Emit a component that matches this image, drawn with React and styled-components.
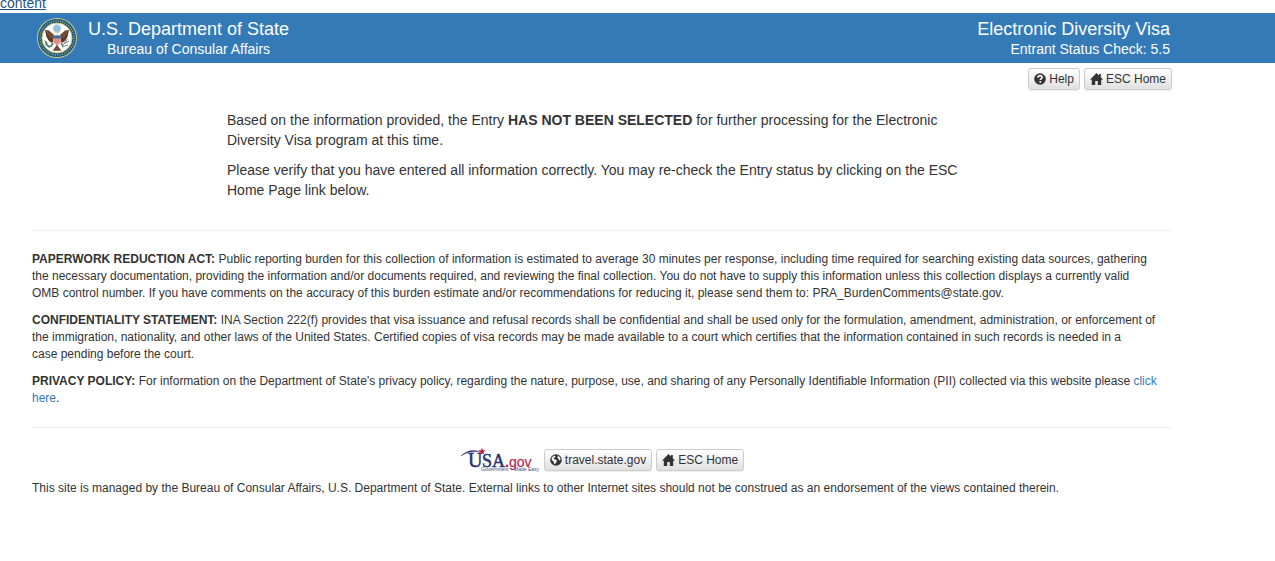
import React from "react";
import styled, { createGlobalStyle } from "styled-components";

const GlobalStyle = createGlobalStyle`
  *, *::before, *::after { box-sizing: border-box; }
  body {
    margin: 0;
    background: #fff;
    color: #333;
    font: 14px/20px "Liberation Sans", Arial, sans-serif;
  }
`;

const SkipBar = styled.nav`
  display: flex;
  align-items: flex-end;
  height: 13px;
  overflow: hidden;
`;

const SkipLink = styled.a`
  color: #23527c;
  text-decoration: underline;
`;

const Container = styled.div`
  max-width: 1204px;
  padding: 0 32px;
`;

const Banner = styled.header`
  background: #337ab7;
  color: #fff;
`;

const BannerRow = styled(Container)`
  display: flex;
  justify-content: space-between;
  align-items: center;
  min-height: 50px;
  padding-right: 34px;
`;

const Brand = styled.div`
  display: flex;
  align-items: center;
  gap: 11px;
  padding-left: 5px;
`;

const Heading = styled.div`
  padding-top: 2px;
  text-align: ${(p) => p.$align};
`;

const Title = styled.h1`
  margin: 0;
  font-size: 18px;
  font-weight: 400;
  line-height: 20px;
`;

const Subtitle = styled.p`
  margin: 0;
`;

const Tools = styled.div`
  display: flex;
  justify-content: ${(p) => p.$justify};
  align-items: center;
  gap: 4px;
`;

const TopTools = styled(Tools)`
  padding-top: 5px;
`;

const Button = styled.button`
  display: inline-flex;
  align-items: center;
  gap: 3px;
  padding: 1px 5px;
  border: 1px solid #ccc;
  border-radius: 3px;
  background: linear-gradient(#fff, #e0e0e0);
  box-shadow: inset 0 1px 0 rgba(255, 255, 255, 0.15), 0 1px 1px rgba(0, 0, 0, 0.075);
  color: #333;
  font: 12px/18px "Liberation Sans", Arial, sans-serif;
  cursor: pointer;
`;

const Result = styled.main`
  max-width: 782px;
  margin: 20px auto 30px;
  padding: 0 16px;
`;

const Paragraph = styled.p`
  margin: 0 0 10px;
  &:last-child { margin-bottom: 0; }
`;

const Rule = styled.hr`
  margin: 20px 0;
  border: 0;
  border-top: 1px solid #eee;
`;

const Notices = styled.section`
  font-size: 12px;
  line-height: 17px;
`;

const Link = styled.a`
  color: #337ab7;
  text-decoration: none;
`;

const ManagedBy = styled.p`
  margin: 8px 0 0;
  font-size: 12px;
  line-height: 17px;
`;

const HelpIcon = () => (
  <svg width="12" height="12" viewBox="0 0 12 12" aria-hidden="true">
    <circle cx="6" cy="6" r="5.8" fill="#333" />
    <path d="M3.9 4.7C3.9 3.2 4.7 2.6 6 2.6S8.1 3.3 8.1 4.4C8.1 5.7 6.3 5.6 6.3 7.1" fill="none" stroke="#f4f4f4" strokeWidth="1.7" />
    <rect x="5.4" y="8" width="1.8" height="1.7" fill="#f4f4f4" />
  </svg>
);

const HomeIcon = () => (
  <svg width="13" height="12" viewBox="0 0 13 12" aria-hidden="true">
    <path d="M6.5 0L9 2.5V1H10.8V4.3L13 6.8H11.2V12H7.8V8H5.2V12H1.8V6.8H0Z" fill="#333" />
  </svg>
);

const GlobeIcon = () => (
  <svg width="12" height="12" viewBox="0 0 12 12" aria-hidden="true">
    <circle cx="6" cy="6" r="5.8" fill="#333" />
    <path d="M2.2 3L4.4 1.5L5.6 2.2L5 3.5L3.6 4.1L3.9 5.1L5.5 5.5L6.9 6.5L6.6 8L5.4 9.2L4.9 10.6L4.1 9.8L3.8 7.8L2.2 6.4L1.4 4.8ZM7.4 1.4L9.6 2.7L10.7 4.9L9.9 6.4L8.8 5.9L8.3 4.5L7.1 4L7.9 3Z" fill="#f4f4f4" />
  </svg>
);

const Seal = () => (
  <svg width="40" height="40" viewBox="0 0 40 40" role="img" aria-label="U.S. Department of State seal">
    <circle cx="20" cy="20" r="20" fill="#d5cf8b" />
    <circle cx="20" cy="20" r="19.1" fill="#1f5878" />
    <circle cx="20" cy="20" r="17" fill="none" stroke="#8fa985" strokeWidth="1.6" strokeDasharray="1 1.3" />
    <circle cx="20" cy="20" r="15" fill="#fff" stroke="#d2c67c" strokeWidth="1" />
    <circle cx="20" cy="10.5" r="4" fill="#91bfe0" stroke="#cfe1ee" />
    <path d="M8 12L12 12.5L17 17V22L15 25L12 23L9.5 19ZM32 12L28 12.5L23 17V22L25 25L28 23L30.5 19Z" fill="#5b3a27" />
    <path d="M9.5 13L14 20M12 13L16 20M30.5 13L26 20M28 13L24 20" stroke="#a87945" strokeWidth=".7" />
    <path d="M18 15L20 13L22 15L21 18H19Z" fill="#efe8dc" />
    <path d="M19 13.5H22L20.5 15Z" fill="#d5a544" />
    <path d="M16 17.5H24V24L20 28L16 24Z" fill="#eba9a2" />
    <path d="M16 17.5H24V20.5H16Z" fill="#416da2" />
    <path d="M18 20.5V25M20 20.5V27M22 20.5V25" stroke="#cf6463" strokeWidth=".8" />
    <path d="M16 25L13.5 29M24 25L26.5 29M20 28L17 32H23Z" stroke="#71472d" strokeWidth="1.4" fill="#7e543a" />
    <path d="M7.5 22L10 24L11 27L15 28L12 30L8.5 27Z" fill="#578964" />
    <path d="M25 27L32 23M25 29L31 27M27 26L30.5 21" stroke="#75868c" strokeWidth="1" />
  </svg>
);

const UsaGov = () => (
  <svg width="80" height="24" viewBox="0 0 80 24" role="img" aria-label="USA.gov, Government Made Easy">
    <path d="M1 8C6 3 13 1 20 4C14 2.8 7 4 1 8Z" fill="#27336e" stroke="#27336e" strokeWidth=".4" />
    <text x="8" y="19" fontFamily="Liberation Serif, serif" fontSize="20" fill="#27336e" stroke="#27336e" strokeWidth=".5">U</text>
    <text x="22" y="19" fontFamily="Liberation Serif, serif" fontSize="18" fill="#27336e" stroke="#27336e" strokeWidth=".5">SA</text>
    <text x="45" y="19" fontFamily="Liberation Sans, sans-serif" fontSize="14" fill="#b51f4b" stroke="#b51f4b" strokeWidth=".2"><tspan fontWeight="700">.</tspan>gov</text>
    <path d="M22 0L23 2.3L25.6 2.3L23.6 4L24.4 6.6L22 5L19.6 6.4L20.4 4L18.4 2.3H21Z" fill="#c9203f" />
    <text x="21" y="23" fontFamily="Liberation Sans, sans-serif" fontSize="5" fill="#454c88">Government</text>
    <text x="54" y="23" fontFamily="Liberation Sans, sans-serif" fontSize="5" fill="#454c88">Made Easy</text>
  </svg>
);

const HomeButton = () => (
  <Button type="button"><HomeIcon />ESC Home</Button>
);

export default function App() {
  return (
    <>
      <GlobalStyle />
      <SkipBar><SkipLink href="#result">content</SkipLink></SkipBar>
      <Banner>
        <BannerRow>
          <Brand>
            <Seal />
            <Heading $align="center">
              <Title>U.S. Department of State</Title>
              <Subtitle>Bureau of Consular Affairs</Subtitle>
            </Heading>
          </Brand>
          <Heading $align="right">
            <Title as="h2">Electronic Diversity Visa</Title>
            <Subtitle>Entrant Status Check: 5.5</Subtitle>
          </Heading>
        </BannerRow>
      </Banner>
      <Container>
        <TopTools $justify="flex-end">
          <Button type="button"><HelpIcon />Help</Button>
          <HomeButton />
        </TopTools>
        <Result id="result">
          <Paragraph>
            Based on the information provided, the Entry <b>HAS NOT BEEN SELECTED</b> for further
            processing for the Electronic Diversity Visa program at this time.
          </Paragraph>
          <Paragraph>
            Please verify that you have entered all information correctly. You may re-check the Entry
            status by clicking on the ESC Home Page link below.
          </Paragraph>
        </Result>
        <Rule />
        <Notices>
          <Paragraph>
            <b>PAPERWORK REDUCTION ACT:</b> Public reporting burden for this collection of information
            is estimated to average 30 minutes per response, including time required for searching
            existing data sources, gathering<br />
            the necessary documentation, providing the information
            and/or documents required, and reviewing the final collection. You do not have to supply
            this information unless this collection displays a currently valid<br />
            OMB control number. If
            you have comments on the accuracy of this burden estimate and/or recommendations for
            reducing it, please send them to: PRA_BurdenComments@state.gov.
          </Paragraph>
          <Paragraph>
            <b>CONFIDENTIALITY STATEMENT:</b> INA Section 222(f) provides that visa issuance and
            refusal records shall be confidential and shall be used only for the formulation,
            amendment, administration, or enforcement of the immigration, nationality, and other laws
            of the United States. Certified copies of visa records may be made available to a court
            which certifies that the information contained in such records is needed in a<br />
            case pending before the court.
          </Paragraph>
          <Paragraph>
            <b>PRIVACY POLICY:</b> For information on the Department of State’s privacy policy,
            regarding the nature, purpose, use, and sharing of any Personally Identifiable Information
            (PII) collected via this website please <Link href="#privacy">click here</Link>.
          </Paragraph>
        </Notices>
        <Rule />
        <footer>
          <Tools $justify="center">
            <UsaGov />
            <Button type="button"><GlobeIcon />travel.state.gov</Button>
            <HomeButton />
          </Tools>
          <ManagedBy>
            This site is managed by the Bureau of Consular Affairs, U.S. Department of State. External
            links to other Internet sites should not be construed as an endorsement of the views
            contained therein.
          </ManagedBy>
        </footer>
      </Container>
    </>
  );
}
